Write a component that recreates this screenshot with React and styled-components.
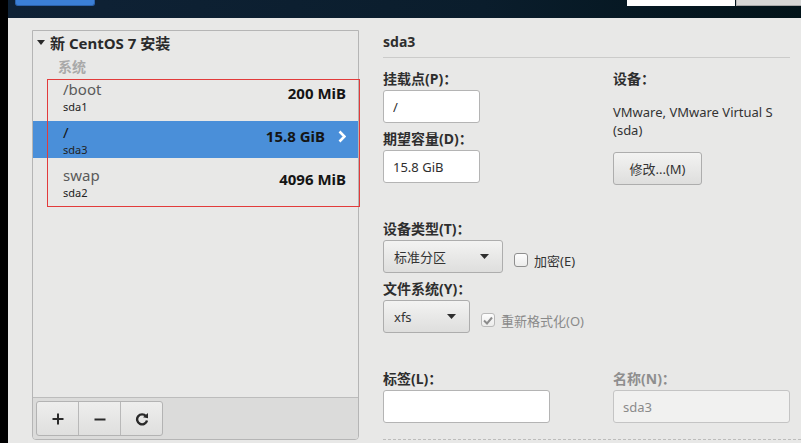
import React from 'react'
import styled, { createGlobalStyle } from 'styled-components'

const GlobalStyle = createGlobalStyle`
body {
  margin: 0;
  background: #e8e8e7;
  font-family: "Noto Sans", "Noto Sans CJK SC", sans-serif;
  color: #2e2e2e;
}
`;

const Screen = styled.div`
display: flex;
width: 801px;
height: 443px;
overflow: hidden;
`;

const Strip = styled.div`
width: 8px;
flex: none;
background: #000;
`;

const Main = styled.div`
flex: 1;
display: flex;
flex-direction: column;
min-width: 0;
`;

const TopBar = styled.div`
height: 18px;
flex: none;
display: flex;
align-items: flex-start;
padding-left: 7px;
background: linear-gradient(90deg, #0f2236 0%, #0a1d2c 60%, #021319 100%);
`;

const HelpButton = styled.div`
width: 78px;
height: 5px;
background: #3b7fd6;
border: 1px solid #2b62ac;
border-top: none;
border-radius: 0 0 3px 3px;
`;

const SearchStub = styled.div`
margin-left: auto;
width: 108px;
height: 6px;
background: #fff;
`;

const GrayStub = styled.div`
margin-left: 1px;
width: 64px;
height: 5px;
background: #d6d6d5;
border-bottom: 1px solid #a9a9a9;
border-left: 1px solid #b5b5b5;
`;

const Body = styled.div`
flex: 1;
display: flex;
gap: 24px;
padding: 12px 0 0 24px;
`;

/* ---------- left tree ---------- */

const TreePanel = styled.div`
box-sizing: border-box;
width: 327px;
height: 410px;
flex: none;
display: flex;
flex-direction: column;
border: 1px solid #b5b5b5;
border-radius: 0 0 4px 4px;
`;

const Tree = styled.div`
flex: 1;
`;

const TreeTitle = styled.div`
height: 22px;
display: flex;
align-items: center;
gap: 5px;
padding-left: 4px;
font-size: 15px;
font-weight: bold;
color: #2a2a2a;
`;

const GroupLabel = styled.div`
margin-top: 4px;
padding-left: 25px;
line-height: 20px;
font-size: 14px;
font-weight: bold;
color: #a9a9a9;
`;

const List = styled.div`
position: relative;
margin-top: 1px;
display: flex;
flex-direction: column;
gap: 6px;
`;

const RedMark = styled.div`
position: absolute;
left: 14px;
right: -2px;
top: 1px;
height: 128px;
border: 1px solid #e23b3b;
box-sizing: border-box;
pointer-events: none;
`;

const Row = styled.div`
display: grid;
grid-template-columns: 1fr auto;
height: 37px;
box-sizing: border-box;
padding: 2px 12px 0 30px;
background: ${p => (p.$selected ? '#4a8fd9' : 'transparent')};
`;

const MountName = styled.div`
line-height: 18px;
font-size: 15px;
color: ${p => (p.$selected ? '#161616' : '#5a5a5a')};
`;

const DevName = styled.div`
grid-column: 1;
line-height: 17px;
font-size: 11px;
color: #222;
`;

const Size = styled.div`
grid-column: 2;
grid-row: 1 / span 2;
align-self: start;
margin-top: 4px;
display: flex;
align-items: center;
gap: 13px;
line-height: 18px;
font-size: 15px;
font-weight: bold;
color: #141414;
`;

const Toolbar = styled.div`
border-top: 1px solid #bcbcbc;
background: #dbdbda;
padding: 3px;
border-radius: 0 0 3px 3px;
`;

const ButtonGroup = styled.div`
display: inline-flex;
height: 35px;
box-sizing: border-box;
border: 1px solid #b3b3b3;
border-radius: 3px;
background: linear-gradient(#eeeeed, #dfdfde);
overflow: hidden;
`;

const ToolButton = styled.div`
width: 41px;
display: flex;
align-items: center;
justify-content: center;
& + & {
  border-left: 1px solid #b8b8b8;
}
`;

/* ---------- right details ---------- */

const Details = styled.div`
flex: 1;
display: flex;
flex-direction: column;
min-width: 0;
`;

const Heading = styled.div`
line-height: 24px;
font-size: 14px;
font-weight: bold;
color: #2e2e2e;
`;

const Rule = styled.div`
margin: 3px 11px 0 0;
border-top: 1px solid #cbcbca;
`;

const FormGrid = styled.div`
display: grid;
grid-template-columns: 230px 177px;
margin-top: 12px;
`;

const Column = styled.div`
display: flex;
flex-direction: column;
align-items: flex-start;
`;

const Label = styled.div`
line-height: 18px;
margin-top: ${p => p.$gap || 0}px;
margin-bottom: 2px;
font-size: 14px;
font-weight: bold;
color: ${p => (p.$muted ? '#8e8e8e' : '#2e2e2e')};
`;

const TextField = styled.input`
box-sizing: border-box;
width: ${p => p.$w}px;
height: 33px;
padding: 0 9px;
border: 1px solid ${p => (p.disabled ? '#c4c4c4' : '#b4b4b4')};
border-radius: 3px;
background: ${p => (p.disabled ? '#f1f1f0' : '#fff')};
font-family: "Noto Sans", "Noto Sans CJK SC", sans-serif;
font-size: 13px;
color: ${p => (p.disabled ? '#8a8a8a' : '#2e2e2e')};
outline: none;
`;

const Inline = styled.div`
display: flex;
align-items: center;
gap: 11px;
`;

const Dropdown = styled.div`
box-sizing: border-box;
width: ${p => p.$w}px;
height: 33px;
display: flex;
align-items: center;
justify-content: space-between;
padding: 0 13px 0 10px;
border: 1px solid #adadad;
border-radius: 3px;
background: linear-gradient(#f3f3f2, #dededd);
font-size: 13px;
color: #333;
`;

const Check = styled.label`
display: flex;
align-items: center;
gap: 6px;
margin-top: 7px;
font-size: 13px;
color: ${p => (p.$disabled ? '#8a8a8a' : '#333')};
`;

const Box = styled.span`
box-sizing: border-box;
width: 14px;
height: 14px;
display: flex;
align-items: center;
justify-content: center;
border: 1px solid ${p => (p.$disabled ? '#b9b9b9' : '#8f8f8f')};
border-radius: 3px;
background: linear-gradient(#fdfdfd, #ececeb);
`;

const DeviceText = styled.div`
margin-top: 13px;
width: 177px;
line-height: 18px;
font-size: 13px;
color: #333;
`;

const PushButton = styled.div`
margin-top: 13px;
box-sizing: border-box;
width: 89px;
height: 33px;
display: flex;
align-items: center;
justify-content: center;
border: 1px solid #adadad;
border-radius: 3px;
background: linear-gradient(#f3f3f2, #dededd);
font-size: 13px;
color: #333;
`;

const BottomGrid = styled(FormGrid)`
margin-top: 37px;
`;

const Dashed = styled.div`
margin-top: 16px;
border-top: 1px dashed #bdbdbc;
`;

const Arrow = () => (
  <svg width="9" height="5" viewBox="0 0 9 5"><path d="M0 0h9L4.5 5z" fill="#2e2e2e" /></svg>
);

const CheckMark = () => (
  <svg width="10" height="9" viewBox="0 0 10 9">
    <path d="M1 4.5l3 3L9 1.5" fill="none" stroke="#8c8c8c" strokeWidth="2" />
  </svg>
);

const Chevron = () => (
  <svg width="8" height="13" viewBox="0 0 8 13">
    <path d="M1.5 1.5l5 5-5 5" fill="none" stroke="#fff" strokeWidth="2.6" />
  </svg>
);

const partitions = [
  { mount: '/boot', dev: 'sda1', size: '200 MiB' },
  { mount: '/', dev: 'sda3', size: '15.8 GiB', selected: true },
  { mount: 'swap', dev: 'sda2', size: '4096 MiB' },
];

const App = () => {
  return (
    <Screen>
      <GlobalStyle />
      <Strip />
      <Main>
        <TopBar>
          <HelpButton />
          <SearchStub />
          <GrayStub />
        </TopBar>
        <Body>
          <TreePanel>
            <Tree>
              <TreeTitle>
                <svg width="8" height="5" viewBox="0 0 8 5"><path d="M0 0h8L4 5z" fill="#2a2a2a" /></svg>
                新 CentOS 7 安装
              </TreeTitle>
              <GroupLabel>系统</GroupLabel>
              <List>
                {partitions.map(p => (
                  <Row key={p.dev} $selected={p.selected}>
                    <MountName $selected={p.selected}>{p.mount}</MountName>
                    <Size>
                      {p.size}
                      {p.selected && <Chevron />}
                    </Size>
                    <DevName>{p.dev}</DevName>
                  </Row>
                ))}
                <RedMark />
              </List>
            </Tree>
            <Toolbar>
              <ButtonGroup>
                <ToolButton>
                  <svg width="12" height="12" viewBox="0 0 12 12">
                    <path d="M6 0.5v11M0.5 6h11" stroke="#2a2a2a" strokeWidth="2" />
                  </svg>
                </ToolButton>
                <ToolButton>
                  <svg width="12" height="12" viewBox="0 0 12 12">
                    <path d="M0.5 6.5h11" stroke="#2a2a2a" strokeWidth="2" />
                  </svg>
                </ToolButton>
                <ToolButton>
                  <svg width="14" height="14" viewBox="0 0 14 14">
                    <path d="M11 4.2A5 5 0 1 0 12 8.5" fill="none" stroke="#2a2a2a" strokeWidth="2.4" />
                    <path d="M8 5.2L13 1v5.2z" fill="#2a2a2a" />
                  </svg>
                </ToolButton>
              </ButtonGroup>
            </Toolbar>
          </TreePanel>

          <Details>
            <Heading>sda3</Heading>
            <Rule />
            <FormGrid>
              <Column>
                <Label>挂载点(P)：</Label>
                <TextField $w={97} defaultValue="/" />
                <Label $gap={7}>期望容量(D)：</Label>
                <TextField $w={97} defaultValue="15.8 GiB" />
                <Label $gap={37}>设备类型(T)：</Label>
                <Inline>
                  <Dropdown $w={120}>标准分区<Arrow /></Dropdown>
                  <Check><Box />加密(E)</Check>
                </Inline>
                <Label $gap={7}>文件系统(Y)：</Label>
                <Inline>
                  <Dropdown $w={87}>xfs<Arrow /></Dropdown>
                  <Check $disabled><Box $disabled><CheckMark /></Box>重新格式化(O)</Check>
                </Inline>
              </Column>
              <Column>
                <Label>设备：</Label>
                <DeviceText>VMware, VMware Virtual S (sda)</DeviceText>
                <PushButton>修改...(M)</PushButton>
              </Column>
            </FormGrid>
            <BottomGrid>
              <Column>
                <Label>标签(L)：</Label>
                <TextField $w={167} defaultValue="" />
              </Column>
              <Column>
                <Label $muted>名称(N)：</Label>
                <TextField $w={177} disabled defaultValue="sda3" />
              </Column>
            </BottomGrid>
            <Dashed />
          </Details>
        </Body>
      </Main>
    </Screen>
  )
}

export default App
